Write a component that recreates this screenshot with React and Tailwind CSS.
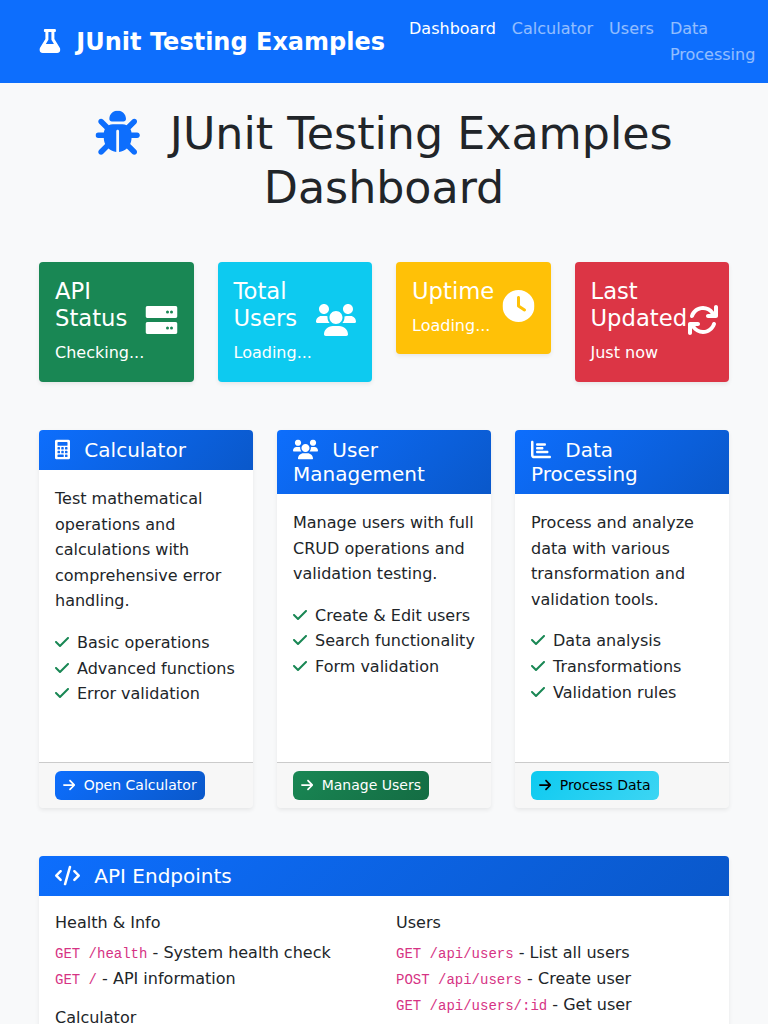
import React from "react";
import { FaBug, FaClock, FaChartBar, FaCheck, FaArrowRight, FaCode } from "react-icons/fa6";

const icon = "inline-block h-[1em] align-[-0.125em]";

function Flask({ className }) {
  return (
    <svg viewBox="0 0 448 512" fill="currentColor" className={className}>
      <path d="M437.2 403.5L320 215V64h8c13.25 0 24-10.75 24-24V24c0-13.25-10.75-24-24-24H120C106.8 0 96 10.75 96 24v16c0 13.25 10.75 24 24 24h8v151L10.8 403.5C-18.48 450.6 15.27 512 70.89 512h306.2C432.7 512 466.5 450.5 437.2 403.5zM137.1 320l48.15-77.63C189.8 237.3 192 230.8 192 224V64h64v160c0 6.875 2.25 13.25 5.875 18.38L309.9 320H137.1z" />
    </svg>
  );
}

function Server({ className }) {
  return (
    <svg viewBox="0 0 512 512" fill="currentColor" className={className}>
      <path
        fillRule="evenodd"
        d="M480 288H32c-17.62 0-32 14.38-32 32v128c0 17.62 14.38 32 32 32h448c17.62 0 32-14.38 32-32V320C512 302.4 497.6 288 480 288zM352 408a24 24 0 1 1 0-48a24 24 0 1 1 0 48zM416 408a24 24 0 1 1 0-48a24 24 0 1 1 0 48zM480 32H32C14.38 32 0 46.38 0 64v128c0 17.62 14.38 32 32 32h448c17.62 0 32-14.38 32-32V64C512 46.38 497.6 32 480 32zM352 152a24 24 0 1 1 0-48a24 24 0 1 1 0 48zM416 152a24 24 0 1 1 0-48a24 24 0 1 1 0 48z"
      />
    </svg>
  );
}

function Users({ className }) {
  return (
    <svg viewBox="0 0 640 512" fill="currentColor" className={className}>
      <path d="M319.9 320c57.41 0 104-46.56 104-104s-46.54-104-104-104s-104 46.56-104 104S262.5 320 319.9 320zM369.9 352H270.1C191.6 352 128 411.7 128 485.3C128 500.1 140.7 512 156.4 512h327.2C499.3 512 512 500.1 512 485.3C512 411.7 448.4 352 369.9 352zM512 160c44.18 0 80-35.82 80-80S556.2 0 512 0s-80 35.82-80 80S467.8 160 512 160zM183.9 216c0-5.449 .9824-10.63 1.609-15.91C174.6 194.1 162.6 192 149.9 192H88.08C39.44 192 0 233.8 0 285.3C0 295.6 7.887 304 17.62 304h199.5C196.7 280.2 183.9 249.7 183.9 216zM128 160c44.18 0 80-35.82 80-80S172.2 0 128 0S48 35.82 48 80S83.82 160 128 160zM551.9 192h-61.84c-12.8 0-24.88 3.037-35.86 8.24C454.8 205.5 455.8 210.6 455.8 216c0 33.71-12.78 64.21-33.16 88h199.7C632.1 304 640 295.6 640 285.3C640 233.8 600.6 192 551.9 192z" />
    </svg>
  );
}

function Rotate({ className }) {
  return (
    <svg viewBox="0 0 512 512" fill="currentColor" className={className}>
      <path d="M464 16c-17.67 0-32 14.31-32 32v74.09C392.1 66.52 327.4 32 256 32C161.5 32 78.59 92.34 49.58 182.2c-5.438 16.81 3.797 34.88 20.61 40.28c16.89 5.5 34.88-3.812 40.3-20.59C130.9 138.5 189.4 96 256 96c50.5 0 96.26 24.55 124.4 64H336c-17.67 0-32 14.31-32 32s14.33 32 32 32h128c17.67 0 32-14.31 32-32V48C496 30.31 481.7 16 464 16zM441.8 289.6c-16.92-5.438-34.88 3.812-40.3 20.59C381.1 373.5 322.6 416 256 416c-50.5 0-96.25-24.55-124.4-64H176c17.67 0 32-14.31 32-32s-14.33-32-32-32H48c-17.67 0-32 14.31-32 32v144c0 17.69 14.33 32 32 32s32-14.31 32-32v-74.09C119.9 445.5 184.6 480 256 480c94.45 0 177.4-60.34 206.4-150.2C467.9 313 458.6 295 441.8 289.6z" />
    </svg>
  );
}

function Calculator({ className }) {
  return (
    <svg viewBox="0 0 384 512" fill="currentColor" className={className}>
      <path
        fillRule="evenodd"
        d="M336 0H48C22.38 0 0 22.38 0 48v416c0 25.6 22.38 48 48 48h288c25.62 0 48-22.38 48-48V48C384 22.38 361.6 0 336 0zM80 64h224q16 0 16 16v64q0 16-16 16H80q-16 0-16-16V80q0-16 16-16zM80 192h32q16 0 16 16v32q0 16-16 16H80q-16 0-16-16v-32q0-16 16-16zM176 192h32q16 0 16 16v32q0 16-16 16h-32q-16 0-16-16v-32q0-16 16-16zM272 192h32q16 0 16 16v32q0 16-16 16h-32q-16 0-16-16v-32q0-16 16-16zM80 288h32q16 0 16 16v32q0 16-16 16H80q-16 0-16-16v-32q0-16 16-16zM176 288h32q16 0 16 16v32q0 16-16 16h-32q-16 0-16-16v-32q0-16 16-16zM272 288h32q16 0 16 16v32q0 16-16 16h-32q-16 0-16-16v-32q0-16 16-16zM80 384h128q16 0 16 16v32q0 16-16 16H80q-16 0-16-16v-32q0-16 16-16zM272 384h32q16 0 16 16v32q0 16-16 16h-32q-16 0-16-16v-32q0-16 16-16z"
      />
    </svg>
  );
}

const stats = [
  { title: "API Status", value: "Checking...", Icon: Server, width: "w-[1em] -translate-x-[0.5px]", bg: "bg-[#198754]" },
  { title: "Total Users", value: "Loading...", Icon: Users, width: "w-[1.25em]", bg: "bg-[#0dcaf0]" },
  { title: "Uptime", value: "Loading...", Icon: FaClock, width: "w-[1em] -translate-x-[0.5px]", bg: "bg-[#ffc107]" },
  { title: "Last Updated", value: "Just now", Icon: Rotate, width: "w-[1em]", bg: "bg-[#dc3545]" },
];

const features = [
  {
    title: "Calculator",
    Icon: Calculator,
    width: "w-[0.75em]",
    text: "Test mathematical operations and calculations with comprehensive error handling.",
    items: ["Basic operations", "Advanced functions", "Error validation"],
    action: "Open Calculator",
    button: "bg-[linear-gradient(135deg,#0d6efd,#0a58ca)] text-white",
  },
  {
    title: "User Management",
    Icon: Users,
    width: "w-[1.25em]",
    text: "Manage users with full CRUD operations and validation testing.",
    items: ["Create & Edit users", "Search functionality", "Form validation"],
    action: "Manage Users",
    button: "bg-[linear-gradient(135deg,#198754,#146c43)] text-white",
  },
  {
    title: "Data Processing",
    Icon: FaChartBar,
    width: "w-[1em]",
    text: "Process and analyze data with various transformation and validation tools.",
    items: ["Data analysis", "Transformations", "Validation rules"],
    action: "Process Data",
    button: "bg-[linear-gradient(135deg,#0dcaf0,#3dd5f3)] text-black",
  },
];

function Navbar() {
  return (
    <nav className="flex items-center bg-[#0d6efd] py-2 pr-[5px] pl-[39px]">
      <a className="mr-4 shrink-0 text-[24px] leading-[36px] font-bold whitespace-nowrap text-white">
        <Flask className={`${icon} mr-2 w-[0.875em] translate-x-[0.4px]`} /> JUnit Testing Examples
      </a>
      <div className="flex text-white/55">
        <a className="p-2 text-white">Dashboard</a>
        <a className="p-2">Calculator</a>
        <a className="p-2">Users</a>
        <a className="p-2">Data Processing</a>
      </div>
    </nav>
  );
}

function StatCard({ title, value, Icon, width, bg }) {
  return (
    <div className={`flex justify-between rounded-[4px] p-4 text-white shadow-[0_2px_4px_rgba(0,0,0,0.075)] ${bg}`}>
      <div>
        <h4 className="mb-2 text-[22.7px] leading-[1.2]">{title}</h4>
        <p>{value}</p>
      </div>
      <div className="flex shrink-0 items-center pb-1 text-[32px]">
        <Icon className={`h-[1em] ${width}`} />
      </div>
    </div>
  );
}

function CardHeader({ title, Icon, width }) {
  return (
    <div className="bg-[linear-gradient(135deg,#0d6efd,#0a58ca)] px-4 py-2 text-white">
      <h5 className="text-[20px] leading-6">
        <Icon className={`${icon} mr-2 -translate-y-[0.4px] ${width}`} /> {title}
      </h5>
    </div>
  );
}

function FeatureCard({ title, Icon, width, text, items, action, button }) {
  return (
    <div className="flex h-[378.2px] flex-col overflow-hidden rounded-[4px] bg-white shadow-[0_2px_4px_rgba(0,0,0,0.075)]">
      <CardHeader title={title} Icon={Icon} width={width} />
      <div className="flex-1 p-4">
        <p className="mb-4">{text}</p>
        <ul>
          {items.map((item) => (
            <li key={item} className="whitespace-nowrap">
              <FaCheck className={`${icon} mr-2 w-[0.875em] text-[#198754]`} />
              {item}
            </li>
          ))}
        </ul>
      </div>
      <div className="flex border-t border-black/[.175] bg-black/[.03] px-4 py-2">
        <a className={`rounded-[6px] px-2 py-1 text-[14px] leading-[21px] ${button}`}>
          <FaArrowRight className={`${icon} mr-1 w-[0.875em]`} /> {action}
        </a>
      </div>
    </div>
  );
}

function Endpoints({ title, rows }) {
  return (
    <div>
      <h6 className="mb-2 leading-[1.2]">{title}</h6>
      <ul className="mb-4">
        {rows.map(([path, text]) => (
          <li key={path} className="h-[26px]">
            <code className="font-['Liberation_Mono',monospace] text-[14px] text-[#d63384]">{path}</code> - {text}
          </li>
        ))}
      </ul>
    </div>
  );
}

export default function App() {
  return (
    <div className="h-screen overflow-hidden bg-[#f8f9fa] font-['DejaVu_Sans',sans-serif] text-[16px] leading-[1.6] text-[#212529]">
      <Navbar />
      <main className="mx-auto w-[690px] pt-6">
        <h1 className="mb-[47.6px] text-center text-[44.336px] leading-[53.4px]">
          <FaBug className={`${icon} mr-4 w-[1em] translate-x-[0.5px] translate-y-[0.4px] text-[#0d6efd]`} /> JUnit Testing Examples Dashboard
        </h1>
        <div className="mb-[48.4px] grid grid-cols-4 items-start gap-6">
          {stats.map((s) => (
            <StatCard key={s.title} {...s} />
          ))}
        </div>
        <div className="mb-12 grid grid-cols-3 gap-6">
          {features.map((f) => (
            <FeatureCard key={f.title} {...f} />
          ))}
        </div>
        <section className="overflow-hidden rounded-[4px] bg-white shadow-[0_2px_4px_rgba(0,0,0,0.075)]">
          <CardHeader title="API Endpoints" Icon={FaCode} width="w-[1.25em]" />
          <div className="grid grid-cols-2 gap-6 px-4 pt-[16.6px] pb-4">
            <div>
              <Endpoints
                title="Health & Info"
                rows={[
                  ["GET /health", "System health check"],
                  ["GET /", "API information"],
                ]}
              />
              <Endpoints title="Calculator" rows={[]} />
            </div>
            <Endpoints
              title="Users"
              rows={[
                ["GET /api/users", "List all users"],
                ["POST /api/users", "Create user"],
                ["GET /api/users/:id", "Get user"],
              ]}
            />
          </div>
        </section>
      </main>
    </div>
  );
}
